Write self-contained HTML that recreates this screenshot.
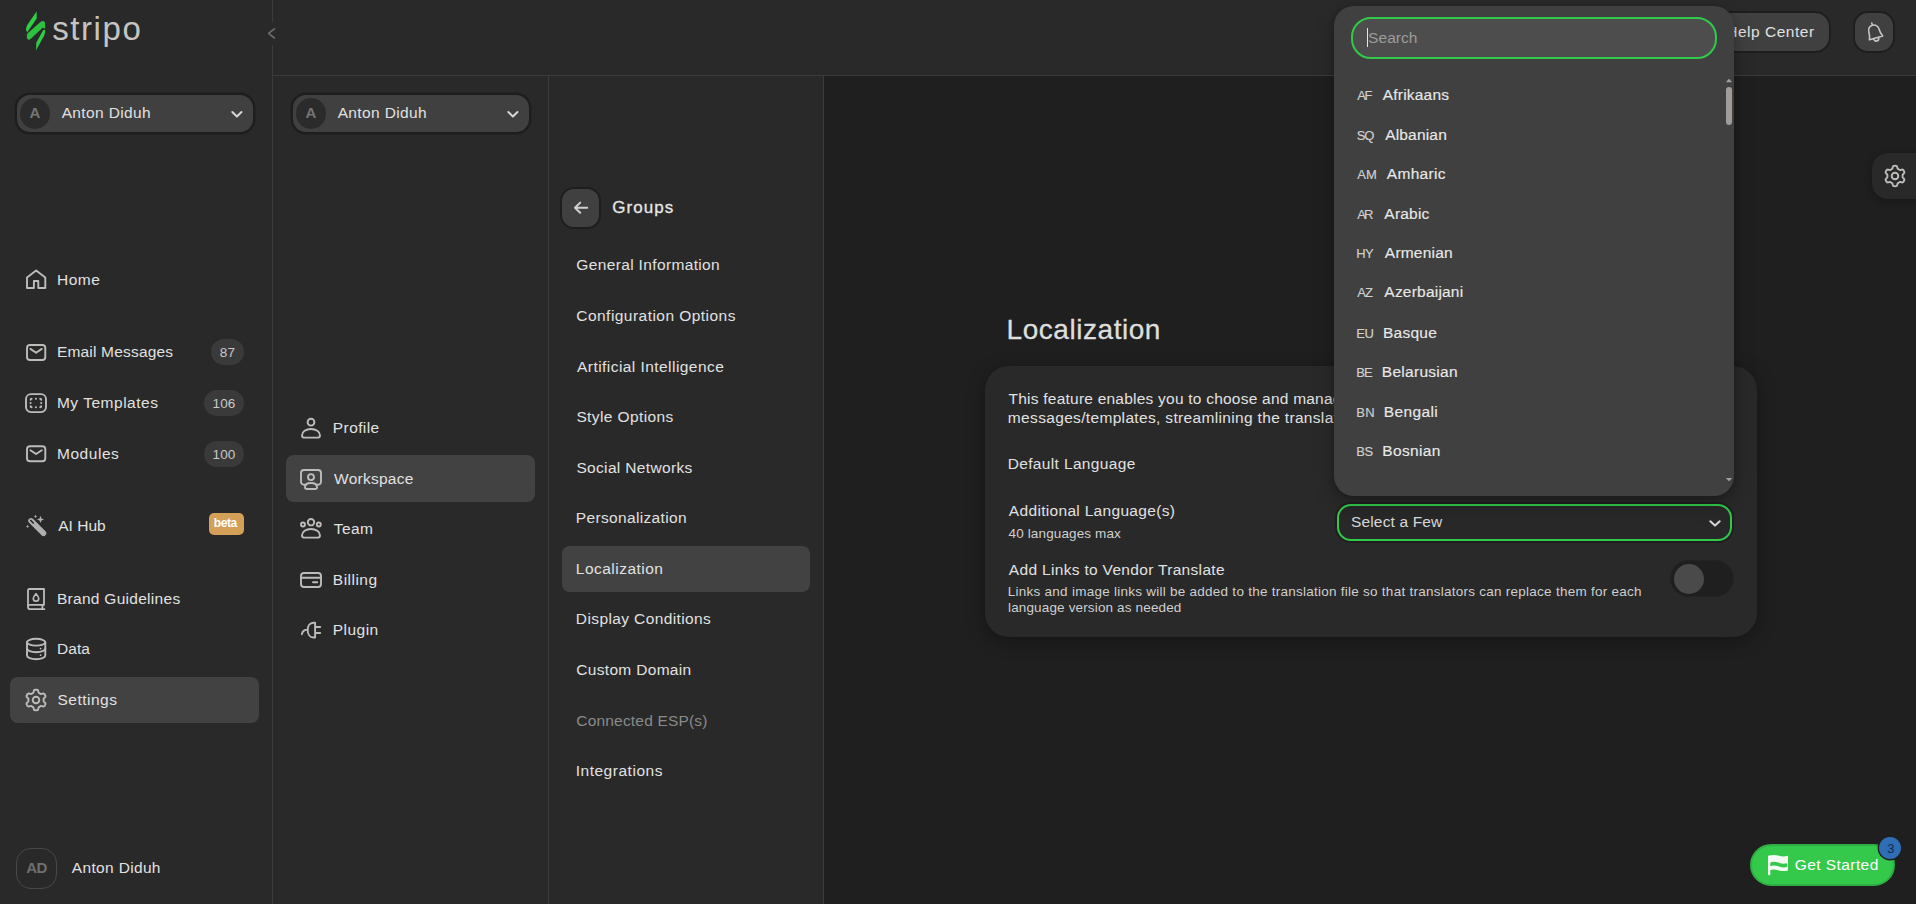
<!DOCTYPE html>
<html>
<head>
<meta charset="utf-8">
<title>Stripo - Localization</title>
<style>
*{box-sizing:border-box;margin:0;padding:0}
html,body{width:1916px;height:904px;overflow:hidden;background:#1f1f1f}
body{font-family:"Liberation Sans",sans-serif;color:#e3e3e3;font-size:15px;position:relative;-webkit-font-smoothing:antialiased}
.abs{position:absolute}
.col{position:absolute;top:0;height:904px;background:#292929}
#c1{left:0;width:273px;border-right:1px solid #3b3b3b}
#c2{left:273px;width:276px;border-right:1px solid #3b3b3b}
#c3{left:549px;width:275px;border-right:1px solid #3b3b3b}
#top{position:absolute;left:273px;top:0;width:1643px;height:76px;background:#292929;border-bottom:1px solid #3b3b3b}
.t{position:absolute;white-space:nowrap;line-height:20px;height:20px;color:#e3e3e3;font-size:15px;letter-spacing:.35px}
.badge{position:absolute;height:26px;border-radius:13px;background:#3a3a3a;color:#c9c9c9;font-size:13.5px;line-height:28px;text-align:center;letter-spacing:.2px}
</style>
</head>
<body>
<div class="col" id="c1"></div>
<div class="col" id="c2"></div>
<div class="col" id="c3"></div>
<div id="top"></div>

<div class="t" style="left:52.18px;top:19px;font-size:33px;letter-spacing:1.580px;color:#c6c4c1;font-weight:normal;">stripo</div>
<div class="abs" style="left:17px;top:94.5px;width:236px;height:37px;background:#404040;border-radius:13px;box-shadow:0 0 0 2.4px #1e1e1e;"></div>
<div class="abs" style="left:19.5px;top:98px;width:30.5px;height:30.5px;background:#2b2b2b;border-radius:50%;"></div>
<div class="t" style="left:29.43px;top:103px;font-size:15px;letter-spacing:0.000px;color:#757575;font-weight:bold;">A</div>
<div class="t" style="left:61.67px;top:103px;font-size:15.5px;letter-spacing:0.362px;color:#e1e1e1;">Anton Diduh</div>
<div class="abs" style="left:10px;top:677px;width:249px;height:46px;background:#424242;border-radius:8px;"></div>
<div class="t" style="left:56.93px;top:270px;font-size:15.5px;letter-spacing:0.567px;color:#e1e1e1;">Home</div>
<div class="t" style="left:56.93px;top:342px;font-size:15.5px;letter-spacing:0.186px;color:#e1e1e1;">Email Messages</div>
<div class="t" style="left:56.93px;top:393px;font-size:15.5px;letter-spacing:0.517px;color:#e1e1e1;">My Templates</div>
<div class="t" style="left:56.93px;top:444px;font-size:15.5px;letter-spacing:0.556px;color:#e1e1e1;">Modules</div>
<div class="t" style="left:58.17px;top:516px;font-size:15.5px;letter-spacing:0.038px;color:#e1e1e1;">AI Hub</div>
<div class="t" style="left:56.93px;top:589px;font-size:15.5px;letter-spacing:0.287px;color:#e1e1e1;">Brand Guidelines</div>
<div class="t" style="left:56.93px;top:639px;font-size:15.5px;letter-spacing:0.107px;color:#e1e1e1;">Data</div>
<div class="t" style="left:57.50px;top:690px;font-size:15.5px;letter-spacing:0.493px;color:#e1e1e1;">Settings</div>
<div class="badge" style="left:211px;top:339px;width:33px;">87</div>
<div class="badge" style="left:204px;top:390px;width:40px;">106</div>
<div class="badge" style="left:204px;top:440.5px;width:40px;">100</div>
<div class="abs" style="left:209px;top:513px;width:35px;height:22px;background:#d4a057;border-radius:5px;"></div>
<div class="t" style="left:213.81px;top:513px;font-size:12px;letter-spacing:-0.458px;color:#ffffff;font-weight:bold;">beta</div>
<div class="abs" style="left:16px;top:848px;width:41px;height:41px;border:1px solid #484848;border-radius:15px;"></div>
<div class="t" style="left:26.13px;top:858px;font-size:15px;letter-spacing:-0.368px;color:#6f6f6f;font-weight:bold;">AD</div>
<div class="t" style="left:71.87px;top:858px;font-size:15.5px;letter-spacing:0.332px;color:#e1e1e1;">Anton Diduh</div>

<div class="abs" style="left:293px;top:94.5px;width:236px;height:37px;background:#404040;border-radius:13px;box-shadow:0 0 0 2.4px #1e1e1e;"></div>
<div class="abs" style="left:295.5px;top:98px;width:30.5px;height:30.5px;background:#2b2b2b;border-radius:50%;"></div>
<div class="t" style="left:305.43px;top:103px;font-size:15px;letter-spacing:0.000px;color:#757575;font-weight:bold;">A</div>
<div class="t" style="left:337.67px;top:103px;font-size:15.5px;letter-spacing:0.362px;color:#e1e1e1;">Anton Diduh</div>
<div class="abs" style="left:286px;top:455px;width:249px;height:47px;background:#424242;border-radius:8px;"></div>
<div class="t" style="left:332.83px;top:418px;font-size:15.5px;letter-spacing:0.404px;color:#e1e1e1;">Profile</div>
<div class="t" style="left:334.03px;top:469px;font-size:15.5px;letter-spacing:0.263px;color:#e1e1e1;">Workspace</div>
<div class="t" style="left:333.75px;top:519px;font-size:15.5px;letter-spacing:0.421px;color:#e1e1e1;">Team</div>
<div class="t" style="left:332.83px;top:570px;font-size:15.5px;letter-spacing:0.485px;color:#e1e1e1;">Billing</div>
<div class="t" style="left:332.83px;top:620px;font-size:15.5px;letter-spacing:0.457px;color:#e1e1e1;">Plugin</div>

<div class="abs" style="left:560px;top:187px;width:41px;height:42px;background:#404040;border:2px solid #1e1e1e;border-radius:14px;"></div>
<div class="t" style="left:612.35px;top:198px;font-size:17px;letter-spacing:1.044px;color:#e6e6e6;-webkit-text-stroke:0.3px #e6e6e6;">Groups</div>
<div class="abs" style="left:562px;top:546px;width:248px;height:46px;background:#424242;border-radius:8px;"></div>
<div class="t" style="left:576.32px;top:255px;font-size:15.5px;letter-spacing:0.355px;color:#e1e1e1;">General Information</div>
<div class="t" style="left:576.31px;top:306px;font-size:15.5px;letter-spacing:0.461px;color:#e1e1e1;">Configuration Options</div>
<div class="t" style="left:577.07px;top:357px;font-size:15.5px;letter-spacing:0.442px;color:#e1e1e1;">Artificial Intelligence</div>
<div class="t" style="left:576.40px;top:407px;font-size:15.5px;letter-spacing:0.390px;color:#e1e1e1;">Style Options</div>
<div class="t" style="left:576.40px;top:458px;font-size:15.5px;letter-spacing:0.338px;color:#e1e1e1;">Social Networks</div>
<div class="t" style="left:575.83px;top:508px;font-size:15.5px;letter-spacing:0.335px;color:#e1e1e1;">Personalization</div>
<div class="t" style="left:575.83px;top:559px;font-size:15.5px;letter-spacing:0.474px;color:#e1e1e1;">Localization</div>
<div class="t" style="left:575.83px;top:609px;font-size:15.5px;letter-spacing:0.392px;color:#e1e1e1;">Display Conditions</div>
<div class="t" style="left:576.31px;top:660px;font-size:15.5px;letter-spacing:0.314px;color:#e1e1e1;">Custom Domain</div>
<div class="t" style="left:576.31px;top:711px;font-size:15.5px;letter-spacing:0.185px;color:#8a8a8a;">Connected ESP(s)</div>
<div class="t" style="left:575.67px;top:761px;font-size:15.5px;letter-spacing:0.526px;color:#e1e1e1;">Integrations</div>

<div class="t" style="left:1006.60px;top:320px;font-size:28px;letter-spacing:0.540px;color:#dedede;-webkit-text-stroke:0.3px #dedede;">Localization</div>
<div class="abs" style="left:985px;top:366px;width:772px;height:271px;background:#292929;border-radius:24px;box-shadow:0 4px 18px rgba(0,0,0,.35);"></div>
<div class="t" style="left:1008.55px;top:389px;font-size:15.5px;letter-spacing:0.227px;color:#e1e1e1;">This feature enables you to choose and manage languages for your email</div>
<div class="t" style="left:1007.87px;top:408px;font-size:15.5px;letter-spacing:0.335px;color:#e1e1e1;">messages/templates, streamlining the translation process.</div>
<div class="t" style="left:1007.63px;top:454px;font-size:15.5px;letter-spacing:0.358px;color:#e1e1e1;">Default Language</div>
<div class="t" style="left:1008.87px;top:501px;font-size:15.5px;letter-spacing:0.313px;color:#e1e1e1;">Additional Language(s)</div>
<div class="t" style="left:1008.59px;top:524px;font-size:13.5px;letter-spacing:0.128px;color:#cfcfcf;">40 languages max</div>
<div class="t" style="left:1008.87px;top:560px;font-size:15.5px;letter-spacing:0.318px;color:#e1e1e1;">Add Links to Vendor Translate</div>
<div class="t" style="left:1007.79px;top:582px;font-size:13.5px;letter-spacing:0.256px;color:#cfcfcf;">Links and image links will be added to the translation file so that translators can replace them for each</div>
<div class="t" style="left:1007.99px;top:598px;font-size:13.5px;letter-spacing:0.150px;color:#cfcfcf;">language version as needed</div>
<div class="abs" style="left:1337px;top:504px;width:395px;height:37px;background:#282828;border:2px solid #31c94a;border-radius:14px;box-shadow:0 0 0 2px #1f1f1f;"></div>
<div class="t" style="left:1351.00px;top:512px;font-size:15.5px;letter-spacing:0.151px;color:#d9d9d9;">Select a Few</div>
<div class="abs" style="left:1670px;top:560px;width:64px;height:37px;background:#1f1f1f;border-radius:19px;border:1px solid #232323;"></div>
<div class="abs" style="left:1673.5px;top:563.5px;width:30px;height:30px;background:#4a4a4a;border-radius:50%;"></div>
<div class="abs" style="left:1690px;top:11px;width:141px;height:42px;background:#404040;border:2px solid #1e1e1e;border-radius:16px;"></div>
<div class="t" style="left:1726.23px;top:22px;font-size:15.5px;letter-spacing:0.521px;color:#e1e1e1;">Help Center</div>
<div class="abs" style="left:1853px;top:11px;width:42px;height:42px;background:#404040;border:2px solid #1e1e1e;border-radius:15px;"></div>
<div class="abs" style="left:1872px;top:153px;width:60px;height:46px;background:#292929;border-radius:16px;box-shadow:0 2px 8px rgba(0,0,0,.3);"></div>

<div class="abs" style="left:1334px;top:6px;width:400px;height:490px;background:#404040;border-radius:20px;box-shadow:0 2px 6px rgba(0,0,0,.22),0 8px 22px rgba(0,0,0,.2);"></div>
<div class="abs" style="left:1351px;top:17px;width:366px;height:42px;background:#4d4d4d;border:2px solid #31c94a;border-radius:20px;"></div>
<div class="abs" style="left:1367px;top:28px;width:1px;height:19px;background:#e6e6e6;"></div>
<div class="t" style="left:1368.10px;top:28px;font-size:15.5px;letter-spacing:0.057px;color:#9c9c9c;">Search</div>
<div class="abs" style="left:1334px;top:70px;width:390px;height:414px;overflow:hidden;">
<div class="abs" style="left:-1334px;top:-70px;width:1916px;height:904px;"><div class="t" style="left:1357.27px;top:86px;font-size:13px;letter-spacing:-1.379px;color:#d0d0d0;-webkit-text-stroke:0.15px #d0d0d0;">AF</div>
<div class="t" style="left:1382.67px;top:85px;font-size:15.5px;letter-spacing:0.221px;color:#e8e8e8;-webkit-text-stroke:0.15px #e8e8e8;">Afrikaans</div>
<div class="t" style="left:1356.71px;top:126px;font-size:13px;letter-spacing:-1.184px;color:#d0d0d0;-webkit-text-stroke:0.15px #d0d0d0;">SQ</div>
<div class="t" style="left:1385.17px;top:125px;font-size:15.5px;letter-spacing:0.187px;color:#e8e8e8;-webkit-text-stroke:0.15px #e8e8e8;">Albanian</div>
<div class="t" style="left:1357.27px;top:165px;font-size:13px;letter-spacing:0.092px;color:#d0d0d0;-webkit-text-stroke:0.15px #d0d0d0;">AM</div>
<div class="t" style="left:1386.87px;top:164px;font-size:15.5px;letter-spacing:0.280px;color:#e8e8e8;-webkit-text-stroke:0.15px #e8e8e8;">Amharic</div>
<div class="t" style="left:1357.27px;top:205px;font-size:13px;letter-spacing:-1.934px;color:#d0d0d0;-webkit-text-stroke:0.15px #d0d0d0;">AR</div>
<div class="t" style="left:1384.37px;top:204px;font-size:15.5px;letter-spacing:0.200px;color:#e8e8e8;-webkit-text-stroke:0.15px #e8e8e8;">Arabic</div>
<div class="t" style="left:1356.23px;top:244px;font-size:13px;letter-spacing:-0.710px;color:#d0d0d0;-webkit-text-stroke:0.15px #d0d0d0;">HY</div>
<div class="t" style="left:1384.87px;top:243px;font-size:15.5px;letter-spacing:0.199px;color:#e8e8e8;-webkit-text-stroke:0.15px #e8e8e8;">Armenian</div>
<div class="t" style="left:1357.27px;top:283px;font-size:13px;letter-spacing:-0.993px;color:#d0d0d0;-webkit-text-stroke:0.15px #d0d0d0;">AZ</div>
<div class="t" style="left:1384.37px;top:282px;font-size:15.5px;letter-spacing:0.209px;color:#e8e8e8;-webkit-text-stroke:0.15px #e8e8e8;">Azerbaijani</div>
<div class="t" style="left:1356.23px;top:324px;font-size:13px;letter-spacing:-0.393px;color:#d0d0d0;-webkit-text-stroke:0.15px #d0d0d0;">EU</div>
<div class="t" style="left:1382.93px;top:323px;font-size:15.5px;letter-spacing:0.276px;color:#e8e8e8;-webkit-text-stroke:0.15px #e8e8e8;">Basque</div>
<div class="t" style="left:1356.23px;top:363px;font-size:13px;letter-spacing:-0.919px;color:#d0d0d0;-webkit-text-stroke:0.15px #d0d0d0;">BE</div>
<div class="t" style="left:1381.83px;top:362px;font-size:15.5px;letter-spacing:0.281px;color:#e8e8e8;-webkit-text-stroke:0.15px #e8e8e8;">Belarusian</div>
<div class="t" style="left:1356.23px;top:403px;font-size:13px;letter-spacing:0.364px;color:#d0d0d0;-webkit-text-stroke:0.15px #d0d0d0;">BN</div>
<div class="t" style="left:1383.83px;top:402px;font-size:15.5px;letter-spacing:0.366px;color:#e8e8e8;-webkit-text-stroke:0.15px #e8e8e8;">Bengali</div>
<div class="t" style="left:1356.23px;top:442px;font-size:13px;letter-spacing:-0.481px;color:#d0d0d0;-webkit-text-stroke:0.15px #d0d0d0;">BS</div>
<div class="t" style="left:1382.33px;top:441px;font-size:15.5px;letter-spacing:0.327px;color:#e8e8e8;-webkit-text-stroke:0.15px #e8e8e8;">Bosnian</div>
<div class="t" style="left:1356.23px;top:482px;font-size:13px;letter-spacing:-1.059px;color:#d0d0d0;-webkit-text-stroke:0.15px #d0d0d0;">BG</div>
<div class="t" style="left:1382.83px;top:481px;font-size:15.5px;letter-spacing:-0.115px;color:#e8e8e8;-webkit-text-stroke:0.15px #e8e8e8;">Bulgarian</div>
</div></div>
<div class="abs" style="left:1726px;top:87px;width:6px;height:38px;background:#a09c99;border-radius:3px;"></div>

<div class="abs" style="left:1750px;top:844px;width:145px;height:42px;background:#35c94c;border:2px solid #2eae44;border-radius:21px;"></div>
<div class="t" style="left:1794.72px;top:855px;font-size:15.5px;letter-spacing:0.431px;color:#ffffff;">Get Started</div>
<div class="abs" style="left:1879.4px;top:837.2px;width:22px;height:22px;background:#2f6db5;border-radius:50%;box-shadow:0 0 0 1.4px #1f1f1f;"></div>
<div class="t" style="left:1887.20px;top:839px;font-size:13px;letter-spacing:0.000px;color:#142a4d;">3</div>
<svg class="abs" style="left:0;top:0" width="1916" height="904" viewBox="0 0 1916 904" fill="none" stroke="#bdbcba" stroke-width="1.9" stroke-linecap="round" stroke-linejoin="round">
<g stroke="none" fill="#2fce43"><path d="M36.7,11.2 L36.7,18.6 L27.3,32.2 C25.4,30.2 25.8,27.6 27.6,24.4 Z"/><path fill="#2cc23f" d="M27.4,33.6 L40.4,22.1 C42.6,20.2 45.1,20.8 45.1,23.6 L45.2,28.6 L42.6,27.7 L30.6,39.1 C28.6,40.6 26.6,39.2 26.8,36.6 Z"/><path d="M45.1,29.4 C45.4,33 44.1,36.2 42.1,39.2 L36,50.6 L36.4,42.4 L43.1,30.2 Z"/></g>
<rect x="262" y="22" width="22" height="23" fill="#292929" stroke="none"/><path d="M274.4,28.8 L268.6,33.4 L274.4,38" stroke="#6b6e6b" stroke-width="1.6"/>
<path d="M232.3,112 L236.9,116.5 L241.5,112" stroke="#d6d6d6" stroke-width="2"/><path d="M508.3,112 L512.9,116.5 L517.5,112" stroke="#d6d6d6" stroke-width="2"/>
<path d="M27,288 V277.4 L36.15,270.5 L45.3,277.4 V288 H38.3 V281 H33.9 V288 Z"/>
<rect x="27" y="345" width="18.3" height="15" rx="3"/><path d="M30.4,348.9 L36.1,352.7 L41.8,348.9"/>
<rect x="27" y="446.3" width="18.3" height="15" rx="3"/><path d="M30.4,450.2 L36.1,454.0 L41.8,450.2"/>
<rect x="26" y="394.1" width="20" height="18" rx="5"/><g stroke-width="2.1"><path d="M35.9,398.8 h0.01"/><path d="M35.9,407.2 h0.01"/><path d="M30.6,403 h0.01"/><path d="M41.2,403 h0.01"/><path d="M30.6,399.8 a1,1 0 0 1 1,-1 M40.2,398.8 a1,1 0 0 1 1,1 M41.2,406.2 a1,1 0 0 1 -1,1 M31.6,407.2 a1,1 0 0 1 -1,-1" stroke-width="1.9"/></g>
<path d="M31,520.8 L43.5,533.3" stroke="#b0afad" stroke-width="5.5"/><path d="M30.7,520.5 L33.3,523" stroke="#292929" stroke-width="1.7"/><path d="M40.5,515.8 L41.508,518.3919999999999 L44.1,519.4 L41.508,520.408 L40.5,523.0 L39.492,520.408 L36.9,519.4 L39.492,518.3919999999999 Z" fill="#b0afad" stroke="none"/><path d="M35.5,514.6 L36.004,515.896 L37.3,516.4 L36.004,516.904 L35.5,518.1999999999999 L34.996,516.904 L33.7,516.4 L34.996,515.896 Z" fill="#b0afad" stroke="none"/><path d="M27.6,524.7 L28.104000000000003,525.996 L29.400000000000002,526.5 L28.104000000000003,527.004 L27.6,528.3 L27.096,527.004 L25.8,526.5 L27.096,525.996 Z" fill="#b0afad" stroke="none"/>
<path d="M28,607 V590.2 a1.2,1.2 0 0 1 1.2,-1.2 H44 V604.8 H30.2 a2.2,2.2 0 0 0 0,4.4 H44.4 M42.4,604.8 V609.2" stroke-width="1.8"/><path d="M36,593.7 C37.6,595.5 38.7,597.1 38.7,598.5 a2.7,2.7 0 0 1 -5.4,0 C33.3,597.1 34.4,595.5 36,593.7 Z" stroke-width="1.7"/>
<ellipse cx="36.15" cy="642.2" rx="9.15" ry="3.4"/><path d="M27,642.2 V655.6 C27,657.6 31,659.2 36.15,659.2 C41.3,659.2 45.3,657.6 45.3,655.6 V642.2"/><path d="M27,648.6 C27,650.6 31,652.2 36.15,652.2 C41.3,652.2 45.3,650.6 45.3,648.6"/><path d="M40.6,648.6 h0.01 M40.6,655.2 h0.01" stroke-width="1.8"/>
<path d="M43.60,700.00 L43.60,700.27 L43.60,700.53 L43.60,700.80 L43.63,701.07 L43.72,701.36 L43.95,701.69 L44.38,702.09 L44.90,702.55 L45.29,703.02 L45.45,703.44 L45.45,703.82 L45.37,704.17 L45.24,704.51 L45.09,704.83 L44.92,705.15 L44.73,705.46 L44.53,705.75 L44.30,706.03 L44.03,706.28 L43.70,706.46 L43.26,706.54 L42.66,706.43 L42.00,706.21 L41.44,706.04 L41.04,706.01 L40.74,706.07 L40.49,706.18 L40.26,706.31 L40.03,706.45 L39.80,706.58 L39.57,706.71 L39.34,706.84 L39.11,706.98 L38.89,707.14 L38.68,707.37 L38.51,707.73 L38.38,708.30 L38.24,708.99 L38.03,709.55 L37.75,709.90 L37.42,710.10 L37.07,710.20 L36.72,710.26 L36.36,710.29 L36.00,710.30 L35.64,710.29 L35.28,710.26 L34.93,710.20 L34.58,710.10 L34.25,709.90 L33.97,709.55 L33.76,708.99 L33.62,708.30 L33.49,707.73 L33.32,707.37 L33.11,707.14 L32.89,706.98 L32.66,706.84 L32.43,706.71 L32.20,706.58 L31.97,706.45 L31.74,706.31 L31.51,706.18 L31.26,706.07 L30.96,706.01 L30.56,706.04 L30.00,706.21 L29.34,706.43 L28.74,706.54 L28.30,706.46 L27.97,706.28 L27.70,706.03 L27.47,705.75 L27.27,705.46 L27.08,705.15 L26.91,704.83 L26.76,704.51 L26.63,704.17 L26.55,703.82 L26.55,703.44 L26.71,703.02 L27.10,702.55 L27.62,702.09 L28.05,701.69 L28.28,701.36 L28.37,701.07 L28.40,700.80 L28.40,700.53 L28.40,700.27 L28.40,700.00 L28.40,699.73 L28.40,699.47 L28.40,699.20 L28.37,698.93 L28.28,698.64 L28.05,698.31 L27.62,697.91 L27.10,697.45 L26.71,696.98 L26.55,696.56 L26.55,696.18 L26.63,695.83 L26.76,695.49 L26.91,695.17 L27.08,694.85 L27.27,694.54 L27.47,694.25 L27.70,693.97 L27.97,693.72 L28.30,693.54 L28.74,693.46 L29.34,693.57 L30.00,693.79 L30.56,693.96 L30.96,693.99 L31.26,693.93 L31.51,693.82 L31.74,693.69 L31.97,693.55 L32.20,693.42 L32.43,693.29 L32.66,693.16 L32.89,693.02 L33.11,692.86 L33.32,692.63 L33.49,692.27 L33.62,691.70 L33.76,691.01 L33.97,690.45 L34.25,690.10 L34.58,689.90 L34.93,689.80 L35.28,689.74 L35.64,689.71 L36.00,689.70 L36.36,689.71 L36.72,689.74 L37.07,689.80 L37.42,689.90 L37.75,690.10 L38.03,690.45 L38.24,691.01 L38.38,691.70 L38.51,692.27 L38.68,692.63 L38.89,692.86 L39.11,693.02 L39.34,693.16 L39.57,693.29 L39.80,693.42 L40.03,693.55 L40.26,693.69 L40.49,693.82 L40.74,693.93 L41.04,693.99 L41.44,693.96 L42.00,693.79 L42.66,693.57 L43.26,693.46 L43.70,693.54 L44.03,693.72 L44.30,693.97 L44.53,694.25 L44.73,694.54 L44.92,694.85 L45.09,695.17 L45.24,695.49 L45.37,695.83 L45.45,696.18 L45.45,696.56 L45.29,696.98 L44.90,697.45 L44.38,697.91 L43.95,698.31 L43.72,698.64 L43.63,698.93 L43.60,699.20 L43.60,699.47 L43.60,699.73 Z" stroke="#bdbcba" stroke-width="1.9" fill="none" stroke-linejoin="round"/><circle cx="36" cy="700" r="3.3" stroke="#bdbcba" stroke-width="1.9" fill="none"/>
<circle cx="311" cy="422.2" r="3.4"/><path d="M302,435.40000000000003 C302,431.6 306,429 311,429 C316,429 320,431.6 320,435.40000000000003 C320,437.0 319,437.6 317.4,437.6 H304.6 C303,437.6 302,437.0 302,435.40000000000003 Z"/>
<path d="M306,484.8 H304 a3,3 0 0 1 -3,-3 V473 a3,3 0 0 1 3,-3 H318 a3,3 0 0 1 3,3 V481.8 a3,3 0 0 1 -3,3 H316"/><circle cx="311" cy="477.1" r="3"/><path d="M305,487.2 C305,484.6 307.6,483 311,483 C314.4,483 317,484.6 317,487.2 C317,488.4 316.2,489 315,489 H307 C305.8,489 305,488.4 305,487.2 Z"/>
<circle cx="311" cy="522.2" r="3.2"/><circle cx="303" cy="524.5" r="2"/><circle cx="318.8" cy="524.5" r="2"/><path d="M302,535.4 C302,531.6 306,529 311,529 C316,529 320,531.6 320,535.4 C320,537.0 319,537.6 317.4,537.6 H304.6 C303,537.6 302,537.0 302,535.4 Z"/>
<rect x="301" y="573" width="20" height="14" rx="3"/><path d="M301,577.8 H321 M313,582.3 H317.2"/>
<path d="M315.1,622.7 H313.4 C309.8,622.7 307.7,626 307.7,630 C307.7,634 309.8,637.5 313.4,637.5 H315.1 Z M315.1,627 H320.2 M315.1,633 H320.2 M307.7,629.6 C304.2,629.6 302.4,631.4 301.9,634.2"/>
<path d="M587.2,207.7 H575.2 M580.2,202.6 L575,207.7 L580.2,212.8" stroke="#cfcfcf" stroke-width="2"/>
<path d="M1710.3,521.2 L1715,525.6 L1719.7,521.2" stroke="#d6d6d6" stroke-width="2"/>
<path d="M1725.8,82.2 L1729,78.8 L1732.2,82.2 Z M1725.8,477.9 L1729,481.3 L1732.2,477.9 Z" fill="#a39f9b" stroke="none"/>
<g transform="translate(1874.6,32.9) rotate(-16) scale(1.05)" stroke="#c6c6c6" stroke-width="1.5"><path d="M0,-9.8 V-7.6 M-6.6,5 C-5.6,3 -5,1 -5,-2.6 a5,5 0 0 1 10,0 C5,1 5.6,3 6.6,5 Z M-2.4,5.4 a2.4,2.6 0 0 0 4.8,0"/></g>
<path d="M1902.60,176.00 L1902.60,176.27 L1902.60,176.53 L1902.60,176.80 L1902.63,177.07 L1902.71,177.36 L1902.93,177.69 L1903.34,178.08 L1903.84,178.54 L1904.21,178.99 L1904.37,179.41 L1904.36,179.78 L1904.28,180.13 L1904.15,180.46 L1904.00,180.79 L1903.83,181.10 L1903.65,181.40 L1903.44,181.70 L1903.22,181.97 L1902.96,182.22 L1902.63,182.41 L1902.20,182.48 L1901.62,182.39 L1900.97,182.19 L1900.43,182.03 L1900.04,182.00 L1899.74,182.07 L1899.49,182.18 L1899.26,182.31 L1899.03,182.45 L1898.80,182.58 L1898.57,182.71 L1898.34,182.84 L1898.11,182.98 L1897.88,183.14 L1897.68,183.36 L1897.51,183.72 L1897.37,184.27 L1897.23,184.93 L1897.01,185.48 L1896.73,185.82 L1896.41,186.00 L1896.06,186.10 L1895.71,186.16 L1895.36,186.19 L1895.00,186.20 L1894.64,186.19 L1894.29,186.16 L1893.94,186.10 L1893.59,186.00 L1893.27,185.82 L1892.99,185.48 L1892.77,184.93 L1892.63,184.27 L1892.49,183.72 L1892.32,183.36 L1892.12,183.14 L1891.89,182.98 L1891.66,182.84 L1891.43,182.71 L1891.20,182.58 L1890.97,182.45 L1890.74,182.31 L1890.51,182.18 L1890.26,182.07 L1889.96,182.00 L1889.57,182.03 L1889.03,182.19 L1888.38,182.39 L1887.80,182.48 L1887.37,182.41 L1887.04,182.22 L1886.78,181.97 L1886.56,181.70 L1886.35,181.40 L1886.17,181.10 L1886.00,180.79 L1885.85,180.46 L1885.72,180.13 L1885.64,179.78 L1885.63,179.41 L1885.79,178.99 L1886.16,178.54 L1886.66,178.08 L1887.07,177.69 L1887.29,177.36 L1887.37,177.07 L1887.40,176.80 L1887.40,176.53 L1887.40,176.27 L1887.40,176.00 L1887.40,175.73 L1887.40,175.47 L1887.40,175.20 L1887.37,174.93 L1887.29,174.64 L1887.07,174.31 L1886.66,173.92 L1886.16,173.46 L1885.79,173.01 L1885.63,172.59 L1885.64,172.22 L1885.72,171.87 L1885.85,171.54 L1886.00,171.21 L1886.17,170.90 L1886.35,170.60 L1886.56,170.30 L1886.78,170.03 L1887.04,169.78 L1887.37,169.59 L1887.80,169.52 L1888.38,169.61 L1889.03,169.81 L1889.57,169.97 L1889.96,170.00 L1890.26,169.93 L1890.51,169.82 L1890.74,169.69 L1890.97,169.55 L1891.20,169.42 L1891.43,169.29 L1891.66,169.16 L1891.89,169.02 L1892.12,168.86 L1892.32,168.64 L1892.49,168.28 L1892.63,167.73 L1892.77,167.07 L1892.99,166.52 L1893.27,166.18 L1893.59,166.00 L1893.94,165.90 L1894.29,165.84 L1894.64,165.81 L1895.00,165.80 L1895.36,165.81 L1895.71,165.84 L1896.06,165.90 L1896.41,166.00 L1896.73,166.18 L1897.01,166.52 L1897.23,167.07 L1897.37,167.73 L1897.51,168.28 L1897.68,168.64 L1897.88,168.86 L1898.11,169.02 L1898.34,169.16 L1898.57,169.29 L1898.80,169.42 L1899.03,169.55 L1899.26,169.69 L1899.49,169.82 L1899.74,169.93 L1900.04,170.00 L1900.43,169.97 L1900.97,169.81 L1901.62,169.61 L1902.20,169.52 L1902.63,169.59 L1902.96,169.78 L1903.22,170.03 L1903.44,170.30 L1903.65,170.60 L1903.83,170.90 L1904.00,171.21 L1904.15,171.54 L1904.28,171.87 L1904.36,172.22 L1904.37,172.59 L1904.21,173.01 L1903.84,173.46 L1903.34,173.92 L1902.93,174.31 L1902.71,174.64 L1902.63,174.93 L1902.60,175.20 L1902.60,175.47 L1902.60,175.73 Z" stroke="#bdbcba" stroke-width="1.9" fill="none" stroke-linejoin="round"/><circle cx="1895" cy="176" r="3.3" stroke="#bdbcba" stroke-width="1.9" fill="none"/>
<g stroke="none" fill="#f4fbf5"><rect x="1768" y="855.4" width="2.3" height="19.8" rx="1"/><path d="M1769.5,855.6 C1772.5,854.6 1776,854.8 1779,855.8 C1782,856.8 1785,856.6 1788,855.8 V870.4 C1785,871.2 1782,871.4 1779,870.4 C1776,869.4 1772.5,869.2 1769.5,870.2 Z"/></g><path d="M1770.3,862.4 C1773,861.4 1776,861.6 1779,862.8 C1782,864 1785,863.8 1787,863.2 V867 C1785,867.6 1782,867.8 1779,866.6 C1776,865.4 1773,865.2 1770.3,866.2 Z" fill="#35c94c" stroke="none"/></svg>

</body>
</html>
